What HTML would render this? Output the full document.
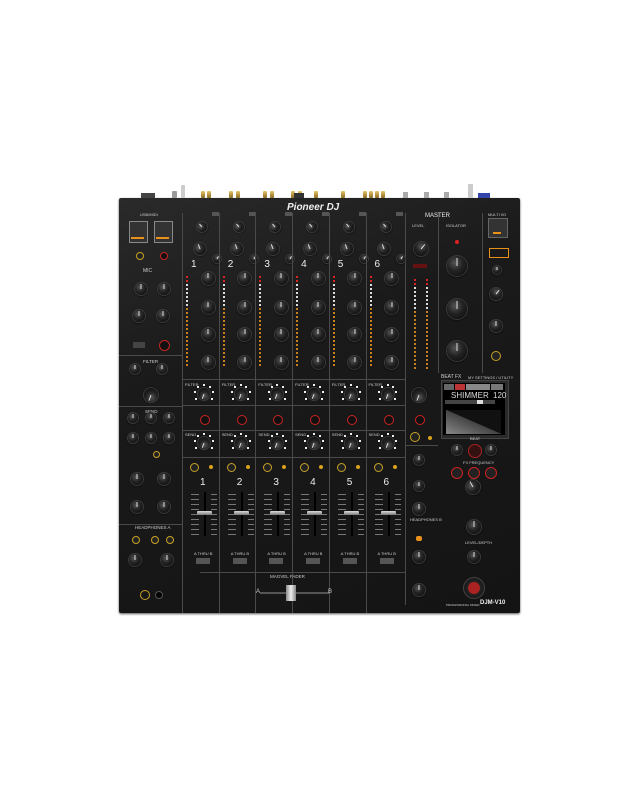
<!DOCTYPE html>
<html><head><meta charset="utf-8"><style>
html,body{margin:0;padding:0;background:#fff;width:640px;height:800px;overflow:hidden}
#s{position:relative;width:640px;height:800px;font-family:"Liberation Sans",sans-serif}
.a{position:absolute}
.body{left:119px;top:198px;width:401px;height:415px;background:linear-gradient(160deg,#2a2a2a 0%,#1a1a1a 35%,#141414 100%);border-radius:2px;box-shadow:0 1px 2px #555}
.k{position:absolute;border-radius:50%;background:radial-gradient(circle at 40% 35%,#555 0%,#222 45%,#0a0a0a 100%);box-shadow:0 0 0 1px #3a3a3a,0 1px 2px #000}
.k::after{content:"";position:absolute;left:50%;top:8%;width:1px;height:42%;background:#ddd;transform:translateX(-50%)}
.ln{position:absolute;background:#4a4a4a}
.t{position:absolute;color:#ccc;font-size:4px;white-space:nowrap}
.rb{position:absolute;border-radius:50%;border:1.5px solid #c22;background:#111}
.yb{position:absolute;border-radius:50%;border:1.5px solid #c9a227;background:#222}
.d{position:absolute;width:2px;height:2px;background:#e8901a}
.w{position:absolute;width:2px;height:2px;background:#eee}
.gold{position:absolute;background:linear-gradient(#e7c76a,#8a6a20);border-radius:1px}
</style></head><body><div id="s">
<div class="a body"></div>
</div>
<script>
var S=document.getElementById('s');
function e(c,x,y,w,h,st,tx){var d=document.createElement('div');d.className=c;d.style.left=x+'px';d.style.top=y+'px';if(w!=null){d.style.width=w+'px';d.style.height=h+'px';}if(st)d.style.cssText+=st;if(tx)d.textContent=tx;S.appendChild(d);return d;}
function k(x,y,r,rot){var d=e('k',x-r,y-r,2*r,2*r);if(rot)d.style.transform='rotate('+rot+'deg)';}
[[172,191,5,7,'#999'],[181,185,4,13,'#ccc'],[201,191,4,7],[207,191,4,7],[229,191,4,7],[236,191,4,7],[263,191,4,7],[270,191,4,7],[291,191,4,7],[298,191,4,7],[314,191,4,7],[341,191,4,7],[363,191,4,7],[369,191,4,7],[375,191,4,7],[381,191,4,7]].forEach(function(c){var d=e('gold',c[0],c[1],c[2],c[3]);if(c[4])d.style.background=c[4];});
e('a',141,193,14,5,'background:#444');e('a',294,193,10,5,'background:#333');
e('a',403,192,5,6,'background:#aaa');e('a',424,192,5,6,'background:#aaa');e('a',444,192,5,6,'background:#aaa');
e('a',468,184,5,14,'background:#ccc');e('a',478,193,12,5,'background:#34a');
e('t',287,202,null,null,'font-size:10px;font-style:italic;font-weight:bold;color:#eee','Pioneer DJ');
e('ln',182,213,1,400);e('ln',405,213,1,392);e('ln',438,213,1,160);
e('ln',182,379,223,1);e('ln',182,405,223,1);e('ln',182,430,223,1);e('ln',182,457,223,1);
e('ln',119,355,63,1);e('ln',119,406,63,1);e('ln',119,524,63,1);e('ln',405,445,33,1);
for(var i=0;i<6;i++){var x=182+i*36.7;
 if(i>0)e('ln',x,213,1,400);
 k(x+20,227,5,-40);k(x+18,249,6,-20);k(x+35,259,4,30);
 e('t',x+9,259,null,null,'font-size:10px;color:#eee',String(i+1));
 e('t',x+30,212,7,4,'background:#555');
 [278,307,334,362].forEach(function(y){k(x+26,y,6.5,0);});
 for(var j=0;j<23;j++){var c=j<2?'#d22':(j<8?'#ddd':'#c8801a');e('d',x+4,276+j*4,null,null,'background:'+c+';width:2px;height:1.5px');}
 k(x+22,394,6,200);for(var j=0;j<7;j++){var a=(j*40-120)*Math.PI/180;e('w',x+22+9*Math.sin(a)-1,394-9*Math.cos(a)-1);}
 e('t',x+3,382,null,null,'','FILTER');
 e('rb',x+18,415,8,8);
 k(x+22,443,6,200);for(var j=0;j<7;j++){var a=(j*40-120)*Math.PI/180;e('w',x+22+9*Math.sin(a)-1,443-9*Math.cos(a)-1);}
 e('t',x+3,432,null,null,'','SEND');
 e('yb',x+8,463,7,7);e('a',x+27,465,4,4,'background:#d9a21a;border-radius:50%');
 e('t',x+18,477,null,null,'font-size:10px;color:#eee',String(i+1));
 e('a',x+22,492,2,44,'background:#000');
 for(var j=0;j<9;j++){e('a',x+9,494+j*5,8,1,'background:#777');e('a',x+29,494+j*5,6,1,'background:#777');}
 e('a',x+15,511,15,4,'background:linear-gradient(#ddd,#777);border-radius:1px');
 e('a',x+14,558,14,6,'background:#555');e('t',x+12,551,null,null,'','A THRU B');
}
e('ln',200,572,205,1);e('t',270,574,null,null,'font-size:4.5px','MAGVEL FADER');
e('a',260,592,70,2,'background:#555');e('a',286,585,10,16,'background:linear-gradient(90deg,#888,#eee,#888)');
e('t',256,589,null,null,'font-size:6px','A');e('t',328,589,null,null,'font-size:6px','B');
e('t',425,213,null,null,'font-size:6px;color:#eee','MASTER');e('t',412,223,null,null,'','LEVEL');e('t',446,223,null,null,'','ISOLATOR');
k(421,249,7,40);e('a',413,264,14,4,'background:#611');
for(var j=0;j<23;j++){var c=j<2?'#d22':(j<8?'#ddd':'#c8801a');e('d',414,279+j*4,null,null,'background:'+c+';height:1.5px');e('d',426,279+j*4,null,null,'background:'+c+';height:1.5px');}
e('a',455,240,4,4,'background:#d22;border-radius:50%');
k(457,266,10,0);k(457,309,10,0);k(457,351,10,0);
e('ln',482,213,1,160);
e('t',488,212,null,null,'','MULTI I/O');e('a',488,218,18,18,'background:#333;border:1px solid #666');e('a',493,232,8,2,'background:#e8901a');
e('a',489,248,18,8,'border:1px solid #e8901a');k(497,270,4,0);k(496,294,6,40);k(496,326,6,0);e('yb',491,351,8,8);
k(419,395,7,200);e('rb',415,415,8,8);e('yb',410,432,8,8);e('a',428,436,4,4,'background:#d9a21a;border-radius:50%');
k(419,460,5,0);k(419,486,5,0);k(419,509,6,0);e('a',416,536,6,5,'background:#e8901a;border-radius:2px');k(419,557,6,0);k(419,590,6,0);
e('t',410,517,null,null,'','HEADPHONES B');
e('t',441,374,null,null,'font-size:5px','BEAT FX');e('t',468,375,null,null,'','MY SETTINGS / UTILITY');
e('a',441,380,66,57,'background:#2a2a2a;border:1px solid #444');
e('a',443,383,62,52,'background:#000');
e('a',444,384,10,6,'background:#666');e('a',455,384,10,6,'background:#b33');e('a',466,384,24,6,'background:#888');e('a',491,384,12,6,'background:#777');
e('t',451,391,null,null,'font-size:8px;color:#ddd','SHIMMER');e('t',493,391,null,null,'font-size:8px;color:#ddd','120');
e('a',445,400,50,4,'background:#444');e('a',477,400,6,4,'background:#ddd');
e('a',446,410,55,24,'background:linear-gradient(to top right,#888 0%,#444 50%,#111 51%)');
e('t',470,436,null,null,'','BEAT');
e('k',452,445,10,10);e('a',468,444,12,12,'background:#311;border-radius:50%;border:1px solid #a22');e('k',486,445,10,10);
e('t',463,460,null,null,'','FX FREQUENCY');
['#c22','#c22','#c22'].forEach(function(c,n){e('a',451+n*17,467,10,10,'border-radius:50%;background:#222;border:1px solid '+c);});
k(473,487,7,-30);
k(474,527,7,0);e('t',465,540,null,null,'','LEVEL/DEPTH');k(474,557,6,0);
e('a',463,577,20,20,'background:radial-gradient(#a22 40%,#222 45%,#111);border-radius:50%;border:1px solid #444');
e('t',446,603,null,null,'font-size:3px','PROFESSIONAL MIXER');e('t',480,600,null,null,'font-size:6px;color:#eee;font-weight:bold','DJM-V10');
e('t',140,212,null,null,'','USB/MIDI');
e('a',129,221,17,20,'background:#333;border:1px solid #888');e('a',154,221,17,20,'background:#333;border:1px solid #888');
e('a',131,237,13,2,'background:#e8901a');e('a',156,237,13,2,'background:#e8901a');
e('yb',136,252,6,6);e('rb',160,252,6,6);e('t',143,268,null,null,'font-size:5px','MIC');
k(141,289,6,0);k(164,289,6,0);k(139,316,6,0);k(163,316,6,0);
e('a',133,342,12,6,'background:#444');e('rb',159,340,9,9);
e('t',143,359,null,null,'font-size:4.5px','FILTER');k(135,369,5,0);k(162,369,5,0);k(151,395,7,200);
e('t',145,409,null,null,'font-size:4.5px','SEND');
[[133,418],[151,418],[169,418],[133,438],[151,438],[169,438]].forEach(function(p){k(p[0],p[1],5,0);});
e('yb',153,451,5,5);
k(137,479,6,0);k(164,479,6,0);k(137,507,6,0);k(164,507,6,0);
e('t',135,525,null,null,'font-size:4.5px','HEADPHONES A');
e('yb',132,536,6,6);e('yb',151,536,6,6);e('yb',166,536,6,6);
k(135,560,6,0);k(167,560,6,0);
e('a',140,590,8,8,'border:1.5px solid #c9a227;border-radius:50%');e('a',155,591,6,6,'background:#000;border:1px solid #555;border-radius:50%');
</script></body></html>
